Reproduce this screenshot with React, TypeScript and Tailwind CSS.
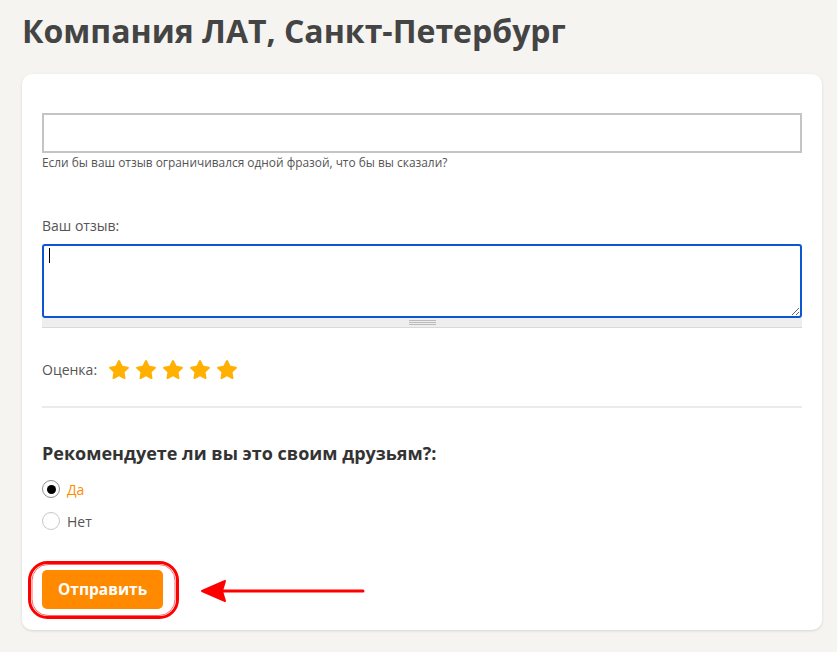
import React from 'react'

const Star = () => (
  <svg width="22" height="21" viewBox="0 0 24 23" className="block">
    <path
      d="M12 1.2c.5 0 .9.3 1.1.7l2.7 5.6 6.1.9c.9.1 1.3 1.2.6 1.9l-4.4 4.3 1 6.1c.2.9-.8 1.6-1.6 1.2L12 19l-5.5 2.9c-.8.4-1.8-.3-1.6-1.2l1-6.1L1.5 10.3c-.7-.7-.3-1.8.6-1.9l6.1-.9 2.7-5.6c.2-.4.6-.7 1.1-.7z"
      fill="#ffb000"
    />
  </svg>
)

const Radio: React.FC<{ checked?: boolean; label: string }> = ({ checked, label }) => (
  <label className="flex items-center gap-[7px] h-[20px]">
    <span
      className={
        checked
          ? 'w-[18px] h-[18px] rounded-full border border-[#8f8f8f] bg-white flex items-center justify-center'
          : 'w-[18px] h-[18px] rounded-full border border-[#c8c8c8] bg-white'
      }
    >
      {checked && <span className="w-[9px] h-[9px] rounded-full bg-black" />}
    </span>
    <span className={checked ? 'text-[14px] text-[#ff8c00]' : 'text-[14px] text-[#555]'}>{label}</span>
  </label>
)

export default function App() {
  return (
    <div className="min-h-[652px] bg-[#f5f4f0] pt-[11px] pl-[22px] font-['Open_Sans',sans-serif]">
      <h1 className="text-[32px] leading-[40px] font-bold text-[#444]">Компания ЛАТ, Санкт-Петербург</h1>

      <div className="mt-[23px] w-[800px] bg-white rounded-[10px] shadow-[0_1px_3px_rgba(0,0,0,0.12)] px-[20px] pt-[39px] pb-[21px]">
        <input className="block w-full h-[40px] border-2 border-[#c4c4c4] outline-none" />
        <p className="mt-[1px] text-[11.9px] leading-[16px] text-[#555]">
          Если бы ваш отзыв ограничивался одной фразой, что бы вы сказали?
        </p>

        <p className="mt-[46px] text-[14px] leading-[20px] text-[#555]">Ваш отзыв:</p>
        <div className="mt-[8px] relative">
          <textarea className="block w-full h-[74px] border-2 border-[#0b57d0] rounded-[3px] outline-none" />
          <span className="absolute left-[7px] top-[4px] w-px h-[15px] bg-black" />
          <div className="h-[10px] bg-[#eeeeee] border-b border-[#d9d9d9] flex items-center justify-center">
            <div className="w-[27px] flex flex-col gap-[1px]">
              <span className="h-px bg-[#bbb]" />
              <span className="h-px bg-[#bbb]" />
              <span className="h-px bg-[#bbb]" />
            </div>
          </div>
        </div>

        <div className="mt-[29px] flex items-center h-[24px]">
          <span className="text-[14px] text-[#555] mr-[11px]">Оценка:</span>
          <div className="flex gap-[5px]">
            <Star />
            <Star />
            <Star />
            <Star />
            <Star />
          </div>
        </div>

        <div className="mt-[25px] h-[2px] bg-[#ebebeb]" />

        <h2 className="mt-[33px] text-[18px] leading-[24px] font-bold text-[#333]">
          Рекомендуете ли вы это своим друзьям?:
        </h2>
        <div className="mt-[14px] flex flex-col gap-[12px]">
          <Radio checked label="Да" />
          <Radio label="Нет" />
        </div>

        <div className="mt-[39px] relative">
          <button className="h-[39px] px-[16px] rounded-[5px] bg-[#ff8a00] text-white text-[15.5px] font-bold">
            Отправить
          </button>
          <svg
            className="absolute left-[-20px] top-[-9px] pointer-events-none"
            width="360"
            height="60"
            viewBox="0 0 360 60"
          >
            <rect x="7.5" y="1.5" width="148" height="55" rx="18" fill="none" stroke="#f00" strokeWidth="3" />
            <rect x="10" y="3.5" width="143" height="51" rx="16" fill="none" stroke="#f00" strokeWidth="1" opacity="0.6" />
            <line x1="196" y1="30" x2="341" y2="30" stroke="#f00" strokeWidth="3" strokeLinecap="round" />
            <path d="M180 30 L203 20 L200 30 L203 40 Z" fill="#f00" stroke="#f00" strokeWidth="2" strokeLinejoin="round" />
          </svg>
        </div>
      </div>
    </div>
  )
}
